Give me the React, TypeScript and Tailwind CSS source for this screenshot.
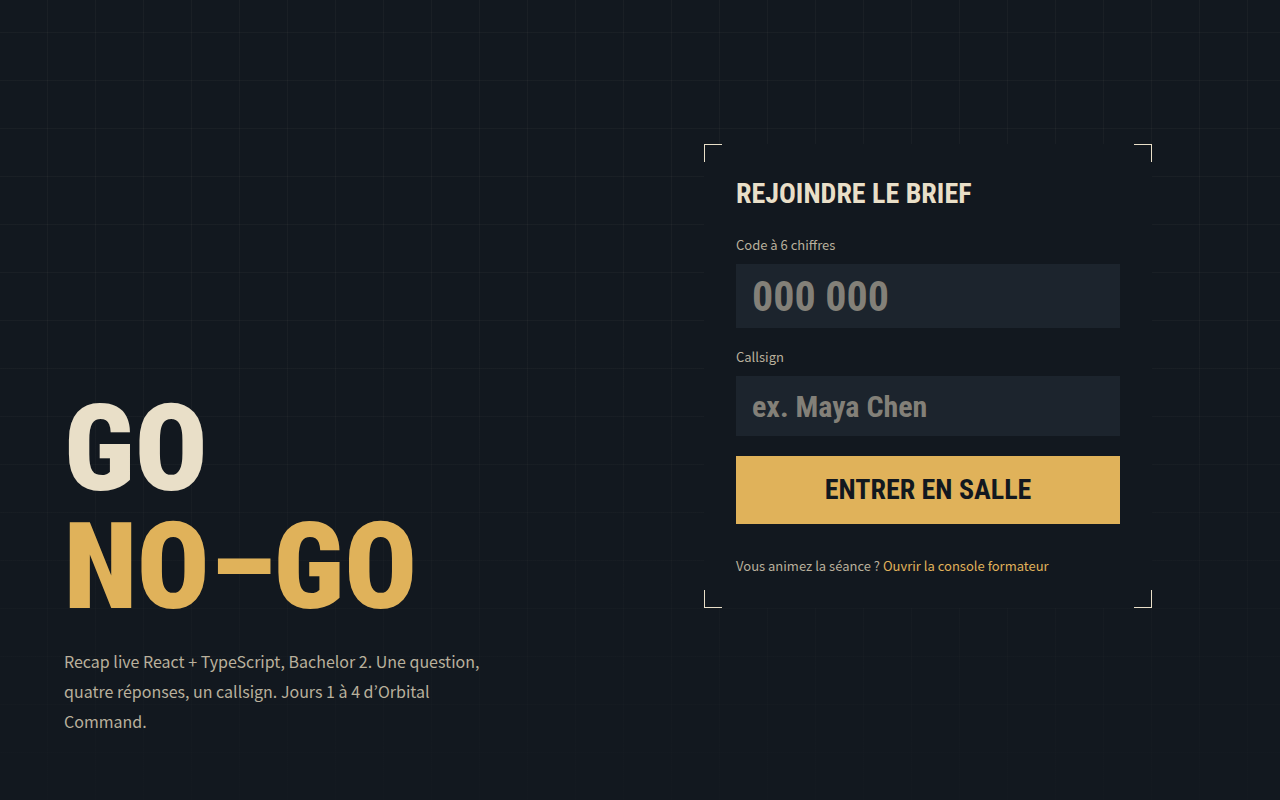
import React, { useState } from "react";

const display = "font-['Roboto_Condensed','Open_Sans_Condensed',Roboto,sans-serif]";

const Corners = () => {
  return (
    <div aria-hidden="true">
      <span className="absolute top-0 left-0 w-[18px] h-[18px] border-t border-l border-[#e9dfc8]" />
      <span className="absolute top-0 right-0 w-[18px] h-[18px] border-t border-r border-[#e9dfc8]" />
      <span className="absolute bottom-0 left-0 w-[18px] h-[18px] border-b border-l border-[#e9dfc8]" />
      <span className="absolute bottom-0 right-0 w-[18px] h-[18px] border-b border-r border-[#e9dfc8]" />
    </div>
  );
};

const Hero = () => {
  return (
    <section className="flex flex-col justify-end p-16">
      <h1 className={`${display} font-black text-[120px] leading-[118px] text-[#e9dfc8]`}>
        <span className="block">GO</span>
        <span className="block whitespace-nowrap text-[#e0b25a]">NO–GO</span>
      </h1>
      <p className="mt-5 max-w-[440px] text-[16px] leading-[30px] text-[#b9b09c]">
        Recap live React + TypeScript, Bachelor 2. Une question, quatre
        réponses, un callsign. Jours 1 à 4 d’Orbital Command.
      </p>
    </section>
  );
};

const JoinForm = () => {
  const [code, setCode] = useState("");
  const [callsign, setCallsign] = useState("");

  return (
    <form
      className="relative w-full max-w-md bg-[#12181f] p-8"
      onSubmit={(e) => e.preventDefault()}
    >
      <Corners />
      <h2 className={`${display} font-bold text-[28px] leading-9 text-[#e9dfc8]`}>
        REJOINDRE LE BRIEF
      </h2>
      <label htmlFor="code" className="block mt-6 text-[13px] leading-[18px] text-[#b9b09c]">
        Code à 6 chiffres
      </label>
      <input
        id="code"
        type="text"
        inputMode="numeric"
        value={code}
        onChange={(e) => setCode(e.target.value)}
        placeholder="000 000"
        className={`${display} font-bold block mt-[10px] w-full h-16 px-4 text-[42px] bg-[#1c242d] text-[#e9dfc8] placeholder:text-[#838078]`}
      />
      <label htmlFor="callsign" className="block mt-5 text-[13px] leading-[18px] text-[#b9b09c]">
        Callsign
      </label>
      <input
        id="callsign"
        type="text"
        value={callsign}
        onChange={(e) => setCallsign(e.target.value)}
        placeholder="ex. Maya Chen"
        className={`${display} font-bold block mt-[10px] w-full h-15 px-4 text-[30px] bg-[#1c242d] text-[#e9dfc8] placeholder:text-[#838078]`}
      />
      <button
        type="submit"
        className={`${display} font-bold block mt-5 w-full h-17 text-[28px] bg-[#e0b25a] text-[#12181f]`}
      >
        ENTRER EN SALLE
      </button>
      <p className="mt-8 text-[13px] leading-5 text-[#b9b09c]">
        Vous animez la séance ?{" "}
        <a href="#console" className="text-[#e0b25a]">
          Ouvrir la console formateur
        </a>
      </p>
    </form>
  );
};

const App = () => {
  return (
    <main className="min-h-screen grid grid-cols-2 bg-[#12181f] bg-[linear-gradient(180deg,transparent_40%,#12181fdd),repeating-linear-gradient(0deg,transparent_0_47px,#e9dfc809_47px_48px),repeating-linear-gradient(90deg,transparent_0_47px,#e9dfc809_47px_48px)] font-['Noto_Sans_CJK_KR',sans-serif]">
      <Hero />
      <section className="flex items-center px-16 pt-16 pb-28">
        <JoinForm />
      </section>
    </main>
  );
};

export default App;
